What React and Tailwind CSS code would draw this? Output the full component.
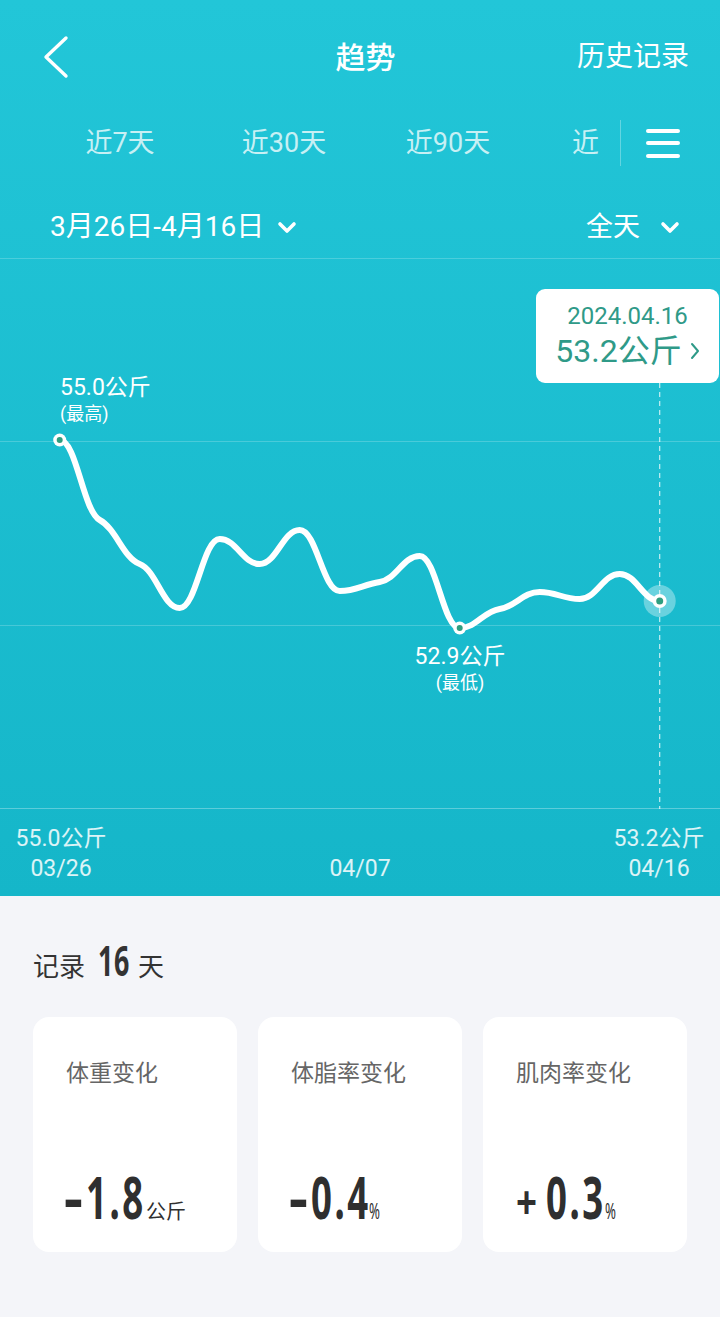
import React from "react";

const points = [439, 519, 563, 607, 538, 563, 529, 590, 581, 555, 627, 608, 591, 598, 573, 600].map((y, i) => ({
    x: 59.7 + i * 40,
    y: y - 258,
}));

// cubic curve with soft tangents at each sample, gives the little shoulders of the chart
const buildPath = (pts) => {
    const n = pts.length;
    const t = pts.map((p, i) => {
        if (i === 0 || i === n - 1) return 0;
        const prev = pts[i - 1];
        const next = pts[i + 1];
        const s0 = p.y - prev.y;
        const s1 = next.y - p.y;
        if (Math.sign(s0) !== Math.sign(s1)) return 0;
        return ((next.y - prev.y) / (next.x - prev.x)) * 0.35;
    });
    let d = `M${pts[0].x},${pts[0].y}`;
    for (let i = 0; i < n - 1; i++) {
        const dx = (pts[i + 1].x - pts[i].x) * 0.42;
        d += ` C${pts[i].x + dx},${pts[i].y + dx * t[i]} ${pts[i + 1].x - dx},${pts[i + 1].y - dx * t[i + 1]} ${pts[i + 1].x},${pts[i + 1].y}`;
    }
    return d;
};

const ChevronDown = () => (
    <svg width="20" height="13" viewBox="0 0 20 13" fill="none">
        <polyline points="3,3 10,10 17,3" stroke="white" strokeWidth="3.6" strokeLinecap="round" strokeLinejoin="round" />
    </svg>
);

// no condensed face is installed, so the narrow DIN-like digits are squeezed with scale-x
const Narrow = ({ box, inner, children }) => (
    <span className={"inline-block whitespace-nowrap " + box}>
        <span className={"inline-block origin-left font-['Noto_Sans','Open_Sans',sans-serif] " + inner}>{children}</span>
    </span>
);

const StatCard = ({ title, children }) => (
    <div className="w-[204px] h-[235px] bg-white rounded-[16px] flex flex-col justify-between pl-[33px] pt-[42px] pb-[26px]">
        <div className="text-[23px] text-[#666666] leading-[30px]">{title}</div>
        <div className="flex items-baseline text-[#2f2f2f] leading-none">
            {children}
        </div>
    </div>
);

const App = () => {
    const path = buildPath(points);
    const first = points[0];
    const low = points[10];
    const last = points[15];

    return (
        <div className="w-[720px] min-h-[1317px] bg-[#f4f5f9] font-['Roboto','Noto_Sans_CJK_SC',sans-serif]">
            <div className="h-[896px] bg-gradient-to-b from-[#22c6d8] to-[#15b6c9] text-white flex flex-col">

                {/* header */}
                <div className="h-[114px] flex items-center">
                    <div className="flex-1 pl-[42px]">
                        <svg width="28" height="44" viewBox="0 0 28 44" fill="none">
                            <polyline points="24,3 4,22 24,41" stroke="white" strokeWidth="3.4" strokeLinecap="round" strokeLinejoin="round" />
                        </svg>
                    </div>
                    <div className="text-[30px] font-medium">趋势</div>
                    <div className="flex-1 flex justify-end pr-[31px] text-[28px]">历史记录</div>
                </div>

                {/* range tabs */}
                <div className="h-[58px] flex items-center">
                    <div className="w-[600px] overflow-hidden flex pl-[38px] shrink-0">
                        {["近7天", "近30天", "近90天"].map((tab) => (
                            <div key={tab} className="w-[164px] shrink-0 text-center text-[27px] text-white/75">{tab}</div>
                        ))}
                        <div className="pl-[42px] text-[27px] text-white/75">近</div>
                    </div>
                    <div className="ml-[20px] w-px h-[46px] bg-white/30" />
                    <div className="ml-[25px] flex flex-col gap-[8.5px]">
                        <div className="w-[34px] h-[4px] rounded-full bg-white" />
                        <div className="w-[34px] h-[4px] rounded-full bg-white" />
                        <div className="w-[34px] h-[4px] rounded-full bg-white" />
                    </div>
                </div>

                {/* date range + day filter */}
                <div className="h-[86px] pt-[24px] flex items-center justify-between pl-[50px] pr-[40px]">
                    <div className="flex items-center gap-[13px]">
                        <span className="text-[28px]">3月26日-4月16日</span>
                        <ChevronDown />
                    </div>
                    <div className="flex items-center gap-[20px]">
                        <span className="text-[27px]">全天</span>
                        <ChevronDown />
                    </div>
                </div>

                {/* chart */}
                <div className="relative h-[550px] border-t border-white/20">
                    <div className="h-[183px] border-b border-white/20" />
                    <div className="h-[184px] border-b border-white/20" />
                    <div className="h-[183px] border-b border-white/30" />

                    <svg className="absolute inset-0" width="720" height="550" viewBox="0 0 720 550">
                        <line x1={last.x} y1="124" x2={last.x} y2="550" stroke="white" strokeOpacity="0.75" strokeWidth="1.2" strokeDasharray="5 4" />
                        <path d={path} fill="none" stroke="white" strokeWidth="6" strokeLinecap="round" strokeLinejoin="round" />
                        <circle cx={first.x} cy={first.y} r="6.5" fill="white" />
                        <circle cx={first.x} cy={first.y} r="3" fill="#2f9e80" />
                        <circle cx={low.x} cy={low.y} r="6.5" fill="white" />
                        <circle cx={low.x} cy={low.y} r="3" fill="#2f9e80" />
                        <circle cx={last.x} cy={last.y} r="16" fill="white" fillOpacity="0.35" />
                        <circle cx={last.x} cy={last.y} r="7" fill="white" />
                        <circle cx={last.x} cy={last.y} r="3.5" fill="#2f9e80" />
                    </svg>

                    <div className="absolute left-[60px] top-[117px] leading-none">
                        <div className="text-[23px]">55.0公斤</div>
                        <div className="text-[18px] mt-[6px]">(最高)</div>
                    </div>

                    <div className="absolute left-[413px] top-[386px] w-[94px] flex flex-col items-center leading-none">
                        <div className="text-[23px]">52.9公斤</div>
                        <div className="text-[18px] mt-[6px]">(最低)</div>
                    </div>

                    <div className="absolute left-[536px] top-[30px] w-[183px] h-[94px] bg-white rounded-[9px] flex flex-col items-center justify-center text-[#2f9a88]">
                        <div className="text-[24px] leading-[30px]">2024.04.16</div>
                        <div className="flex items-center gap-[8px] text-[32px] leading-[40px]">
                            <span>53.2公斤</span>
                            <svg width="10" height="20" viewBox="0 0 10 20" fill="none">
                                <polyline points="2,3 8,10 2,17" stroke="#2f9a88" strokeWidth="2" strokeLinecap="round" strokeLinejoin="round" />
                            </svg>
                        </div>
                    </div>
                </div>

                {/* axis */}
                <div className="flex-1 flex items-end justify-between px-[14px] pb-[12px] text-[23px] leading-[30px] text-white/85">
                    <div className="w-[94px] flex flex-col items-center">
                        <span>55.0公斤</span>
                        <span>03/26</span>
                    </div>
                    <div className="w-[94px] flex flex-col items-center">
                        <span>04/07</span>
                    </div>
                    <div className="w-[94px] flex flex-col items-center">
                        <span>53.2公斤</span>
                        <span>04/16</span>
                    </div>
                </div>
            </div>

            {/* summary */}
            <div className="px-[33px] pt-[43px]">
                <div className="flex items-baseline text-[#333333] h-[44px] leading-none">
                    <span className="text-[26px]">记录</span>
                    <Narrow box="w-[30px] ml-[13px] mr-[10px]" inner="font-bold text-[42px] scale-x-[0.64] tracking-[1px]">16</Narrow>
                    <span className="text-[26px]">天</span>
                </div>

                <div className="mt-[34px] flex gap-[21px]">
                    <StatCard title="体重变化">
                        <Narrow box="w-[22px] -ml-[2px]" inner="font-bold text-[59px]">-</Narrow>
                        <Narrow box="w-[60px]" inner="font-bold text-[59px] scale-x-[0.62] tracking-[4px]">1.8</Narrow>
                        <span className="text-[20px]">公斤</span>
                    </StatCard>
                    <StatCard title="体脂率变化">
                        <Narrow box="w-[22px] -ml-[2px]" inner="font-bold text-[59px]">-</Narrow>
                        <Narrow box="w-[58px]" inner="font-bold text-[59px] scale-x-[0.62] tracking-[4px]">0.4</Narrow>
                        <Narrow box="w-[14px]" inner="text-[22px] scale-x-[0.6]">%</Narrow>
                    </StatCard>
                    <StatCard title="肌肉率变化">
                        <Narrow box="w-[30px]" inner="font-bold text-[46px] scale-x-[0.8]">+</Narrow>
                        <Narrow box="w-[59px]" inner="font-bold text-[59px] scale-x-[0.62] tracking-[4px]">0.3</Narrow>
                        <Narrow box="w-[14px]" inner="text-[22px] scale-x-[0.6]">%</Narrow>
                    </StatCard>
                </div>
            </div>
        </div>
    );
};

export default App;
